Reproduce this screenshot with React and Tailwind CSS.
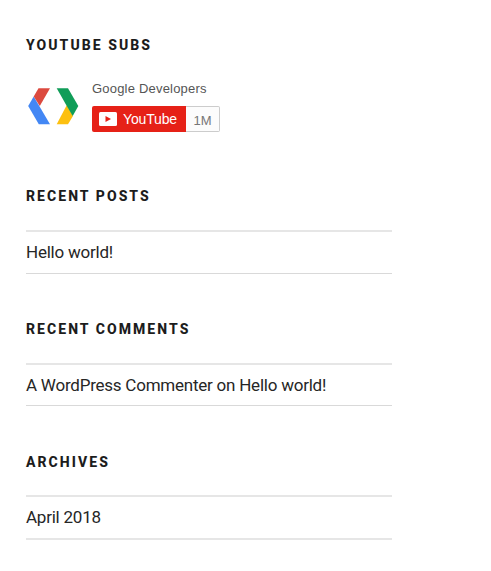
function Heading({ children }) {
  return (
    <h2 className="h-5 whitespace-nowrap text-[14px] leading-[19px] font-extrabold tracking-[2.05px] text-[#1c1c1c]">
      {children}
    </h2>
  );
}

function Logo() {
  return (
    <svg width="52" height="40" viewBox="27 86 52 40" className="mt-[5px] block shrink-0">
      <path d="M33.7 96.5 50 124.2H38.8L28.2 106Z" fill="#4387f4" />
      <path d="M38.5 88.3H50L39.8 106 33.7 96.5Z" fill="#dc4a3f" />
      <path d="M66.8 105 73 116 68 124.2H56.7Z" fill="#fdc010" />
      <path d="M56.7 88.3H68L78.3 106 72.7 116 66.8 106Z" fill="#109d58" />
    </svg>
  );
}

function Entry({ children, className }) {
  return (
    <div className={`w-[366px] border-t-2 border-[#e6e6e6] text-[17px] leading-[40px] tracking-[-0.23px] whitespace-nowrap text-[#262626] ${className}`}>
      {children}
    </div>
  );
}

export default function App() {
  return (
    <main className="h-[571px] w-[491px] overflow-hidden bg-white pl-[26px] pt-9 font-['Roboto',sans-serif]">
      <section className="h-[151px]">
        <Heading>YOUTUBE SUBS</Heading>
        <div className="mt-[25px] flex pl-px">
          <Logo />
          <div className="ml-[13px] font-['Liberation_Sans',Arial,sans-serif]">
            <div className="h-[25px] text-[13px] leading-[15px] tracking-[0.2px] text-[#555]">Google Developers</div>
            <div className="flex h-[26px] w-32">
              <div className="flex w-[94px] items-center rounded-l-[2px] bg-[#e62117] pl-[7px] text-[14px] tracking-[-0.15px] text-white">
                <svg width="18" height="14" viewBox="0 0 18 14" className="mr-1.5">
                  <rect width="18" height="14" rx="1.5" fill="white" />
                  <path d="M6.5 4 12 7 6.5 10Z" fill="#e62117" />
                </svg>
                YouTube
              </div>
              <div className="flex flex-1 items-center justify-center rounded-r-[2px] border border-l-0 border-[#ccc] bg-[#fcfcfc] pt-[3px] text-[13px] text-[#777]">
                1M
              </div>
            </div>
          </div>
        </div>
      </section>
      <section className="h-[133px]">
        <Heading>RECENT POSTS</Heading>
        <Entry className="mt-[23px] h-[44px] border-b border-b-[#d9d9d9]">Hello world!</Entry>
      </section>
      <section className="h-[133px]">
        <Heading>RECENT COMMENTS</Heading>
        <Entry className="mt-[23px] h-[43px] border-b border-b-[#d9d9d9]">A WordPress Commenter on Hello world!</Entry>
      </section>
      <section>
        <Heading>ARCHIVES</Heading>
        <Entry className="mt-[22px] h-[45px] border-b-2">April 2018</Entry>
      </section>
    </main>
  );
}
